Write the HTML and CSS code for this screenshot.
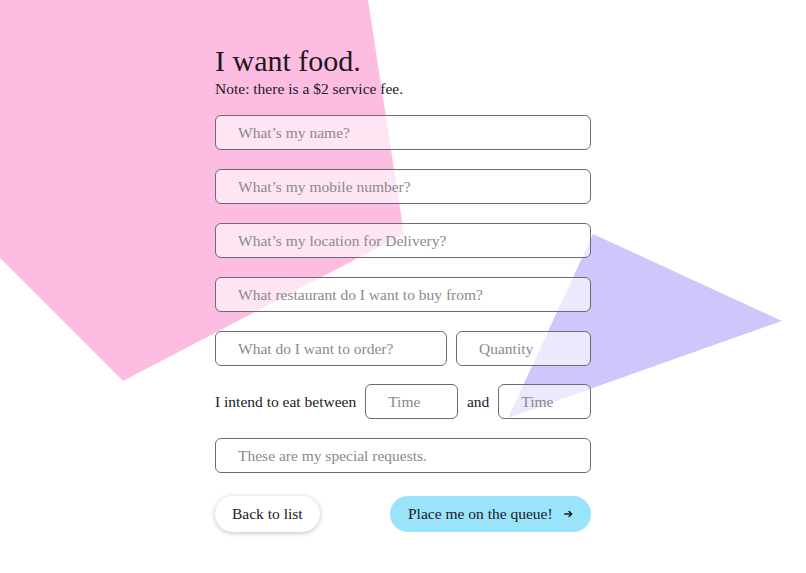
FILE: index.html
```html
<!DOCTYPE html>
<html lang="en">
<head>
    <meta charset="UTF-8">
    <meta name="viewport" content="width=device-width, initial-scale=1.0">
    <title>I want food.</title>
    <link rel="stylesheet" href="styles.css">
</head>
<body>
    <svg class="shapes" width="806" height="573" viewBox="0 0 806 573">
        <polygon points="0,0 368,0 404,234 123,381 0,258" fill="#fdbde2"/>
        <polygon points="593,234 782,321 508,418" fill="#cfc7fb"/>
    </svg>

    <form class="order">
        <h1 class="title">I want food.</h1>
        <p class="note">Note: there is a $2 service fee.</p>

        <input class="field" type="text" placeholder="What’s my name?">
        <input class="field" type="text" placeholder="What’s my mobile number?">
        <input class="field" type="text" placeholder="What’s my location for Delivery?">
        <input class="field" type="text" placeholder="What restaurant do I want to buy from?">

        <div class="row">
            <input class="field grow" type="text" placeholder="What do I want to order?">
            <input class="field qty" type="text" placeholder="Quantity">
        </div>

        <div class="row">
            <span class="label">I intend to eat between</span>
            <input class="field time" type="text" placeholder="Time">
            <span class="label">and</span>
            <input class="field time" type="text" placeholder="Time">
        </div>

        <input class="field" type="text" placeholder="These are my special requests.">

        <div class="actions">
            <button type="button" class="btn back">Back to list</button>
            <button type="submit" class="btn go">
                Place me on the queue!
                <svg width="12" height="12" viewBox="0 0 12 12"><path d="M1.5 6h8.5M6.5 2.5 10 6l-3.5 3.5" fill="none" stroke="#1a1a1a" stroke-width="1.6"/></svg>
            </button>
        </div>
    </form>
</body>
</html>
```

FILE: styles.css
```css
* {
    margin: 0;
    padding: 0;
    box-sizing: border-box;
    font-family: 'Liberation Serif', serif;
}

body {
    width: 806px;
    height: 573px;
    background: #fff;
    position: relative;
    overflow: hidden;
    color: #1c1a1c;
}

.shapes {
    position: absolute;
    top: 0;
    left: 0;
    z-index: 0;
}

.order {
    position: relative;
    z-index: 1;
    width: 376px;
    margin-left: 215px;
    padding-top: 44px;
    display: flex;
    flex-direction: column;
    gap: 19px;
}

.title {
    font-size: 30px;
    font-weight: normal;
    line-height: 34px;
}

.note {
    font-size: 15.5px;
    line-height: 18px;
    margin-top: -17px;
    margin-bottom: -2px;
}

.field {
    height: 35px;
    width: 100%;
    border: 1px solid #6e6a6e;
    border-radius: 6px;
    background: rgba(255, 255, 255, 0.6);
    padding: 0 22px;
    font-size: 15.5px;
    color: #1c1a1c;
    outline: none;
}

.field::placeholder {
    color: #8d888d;
}

.row {
    display: flex;
    align-items: center;
    gap: 9px;
}

.row + .row {
    margin-top: -1px;
}

.grow {
    flex: 1;
}

.qty {
    width: 135px;
}

.time {
    flex: 1;
    min-width: 0;
}

.label {
    font-size: 15.5px;
    white-space: nowrap;
}

.actions {
    display: flex;
    justify-content: space-between;
    margin-top: 4px;
}

.btn {
    height: 36px;
    border: none;
    border-radius: 18px;
    font-size: 15.5px;
    color: #1c1a1c;
    cursor: pointer;
    display: flex;
    align-items: center;
    gap: 10px;
    white-space: nowrap;
}

.back {
    background: #fff;
    padding: 0 17px;
    box-shadow: 0 1px 5px rgba(0, 0, 0, 0.25);
}

.go {
    background: #99e3fb;
    padding: 0 18px;
    width: 201px;
    justify-content: center;
}
```
